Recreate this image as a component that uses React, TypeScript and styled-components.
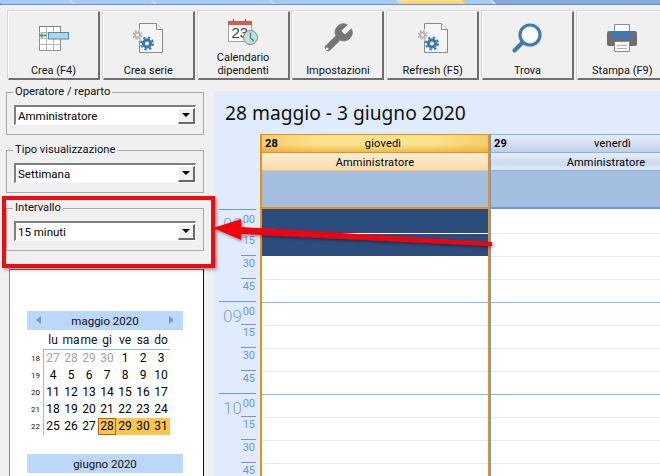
import React from 'react';
import styled, { createGlobalStyle } from 'styled-components';

const GlobalStyle = createGlobalStyle`
  html, body {
    margin: 0;
    padding: 0;
    background: #f0f0f0;
  }
  * {
    box-sizing: border-box;
  }
`;

const Page = styled.div`
  position: relative;
  width: 660px;
  height: 476px;
  overflow: hidden;
  background: #f0f0f0;
  font-family: Roboto, "Liberation Sans", sans-serif;
  font-size: 12px;
  color: #000;
`;

const TabStrip = styled.div`
  display: flex;
  height: 5px;
  overflow: hidden;
  background: #85a8d8;
  border-bottom: 1px solid #5f93d6;
`;

const Tab = styled.div<{ $w: number; $active?: boolean }>`
  width: ${(p) => p.$w}px;
  flex: none;
  transform: skewX(45deg);
  background: ${(p) => (p.$active ? 'linear-gradient(#ffdf90, #fdcf68)' : '#a8caf4')};
  border-right: 2px solid ${(p) => (p.$active ? '#e8c98a' : '#d4e3f6')};
`;

const Toolbar = styled.div`
  display: flex;
  gap: 2.8px;
  padding: 6px 0 0 8px;
  height: 81px;
  width: 760px;
`;

const ToolButton = styled.div`
  width: 92px;
  height: 69px;
  flex: none;
  display: flex;
  flex-direction: column;
  align-items: center;
  background: #f0f0f0;
  border-top: 1px solid #fff;
  border-left: 1px solid #fff;
  border-right: 2px solid #6f6f6f;
  border-bottom: 2px solid #6f6f6f;
  box-shadow: -1px -1px 0 #d6d6d6;
`;

const IconSlot = styled.div<{ $high?: boolean }>`
  height: 30px;
  margin-top: ${(p) => (p.$high ? 5 : 11)}px;
  display: flex;
  align-items: center;
  justify-content: center;
`;

const ToolLabel = styled.div`
  flex: 1;
  display: flex;
  align-items: flex-end;
  padding-bottom: 1px;
  text-align: center;
  line-height: 13px;
  font-size: 11px;
  color: #111;
`;

const Body = styled.div`
  display: flex;
  height: 390px;
`;

const Sidebar = styled.div`
  width: 214px;
  flex: none;
  display: flex;
  flex-direction: column;
`;

const Group = styled.fieldset`
  margin: 0 0 9px 6px;
  padding: 0 7px;
  width: 198px;
  height: 49px;
  flex: none;
  border: 1px solid #a9a9a9;
  min-inline-size: 0;
`;

const Legend = styled.legend`
  padding: 0 2px;
  margin-left: -1px;
  font-size: 11.2px;
  line-height: 12px;
  color: #111;
`;

const Combo = styled.div`
  height: 20px;
  margin-top: 7px;
  display: flex;
  align-items: center;
  justify-content: space-between;
  background: #fff;
  border-top: 2px solid #7f7f7f;
  border-left: 2px solid #7f7f7f;
  border-right: 1px solid #f8f8f8;
  border-bottom: 1px solid #f8f8f8;
  padding-left: 2px;
  font-size: 11.5px;
`;

const ComboArrow = styled.div`
  width: 17px;
  height: 16px;
  display: flex;
  align-items: center;
  justify-content: center;
  background: #f0f0f0;
  border-top: 1px solid #fff;
  border-left: 1px solid #fff;
  border-right: 2px solid #6a6a6a;
  border-bottom: 2px solid #6a6a6a;

  &::after {
    content: '';
    border-left: 4px solid transparent;
    border-right: 4px solid transparent;
    border-top: 4px solid #000;
  }
`;

const CalendarPanel = styled.div`
  margin: 9px 0 0 9px;
  width: 195px;
  flex: 1;
  background: #fff;
  border-top: 1px solid #777;
  border-left: 1px solid #8a8a8a;
  border-right: 1px solid #111;
  padding: 41px 19px 0 17px;
`;

const MonthBar = styled.div`
  position: relative;
  height: 19px;
  width: 156px;
  background: #bbd7fb;
  display: flex;
  align-items: center;
  justify-content: center;
  font-size: 11.5px;
  color: #111;
`;

const MonthArrow = styled.span<{ $right?: boolean }>`
  position: absolute;
  top: 5px;
  ${(p) => (p.$right ? 'right: 9px;' : 'left: 9px;')}
  border-top: 4.5px solid transparent;
  border-bottom: 4.5px solid transparent;
  ${(p) => (p.$right ? 'border-left: 5px solid #6f9bd6;' : 'border-right: 5px solid #6f9bd6;')}
`;

const WeekDays = styled.div`
  display: grid;
  grid-template-columns: repeat(7, 18px);
  margin-left: 16px;
  padding-left: 1px;
  height: 20px;
  align-items: center;
  border-bottom: 1px solid #93bbef;
  width: 127px;
  font-size: 12px;
  color: #111;
  text-align: center;
  white-space: nowrap;
`;

const WeekRow = styled.div`
  display: flex;
  height: 17px;
`;

const WeekNo = styled.div`
  width: 17px;
  flex: none;
  font-size: 8px;
  line-height: 17px;
  text-align: right;
  padding-right: 3px;
  border-right: 1px solid #93bbef;
  color: #111;
`;

const DayCell = styled.div<{ $muted?: boolean; $range?: boolean; $today?: boolean }>`
  width: 18px;
  height: 17px;
  flex: none;
  text-align: center;
  line-height: 17px;
  font-size: 12px;
  color: ${(p) => (p.$muted ? '#a3a3a3' : '#000')};
  background: ${(p) => (p.$range ? '#fbc64f' : 'transparent')};
  ${(p) => p.$today && 'border: 1px solid #b5600f; line-height: 15px;'}
`;

const NextMonth = styled(MonthBar)`
  margin-top: 19px;
`;

const Scheduler = styled.div`
  width: 446px;
  flex: none;
  margin-top: 5px;
  background: #e0ecfd;
  display: flex;
  flex-direction: column;
  overflow: hidden;
`;

const RangeTitle = styled.div`
  height: 43px;
  flex: none;
  padding: 8px 0 0 11px;
  font-family: "Noto Sans", sans-serif;
  font-size: 19.2px;
  line-height: 28px;
  color: #111;
`;

const Grid = styled.div`
  display: flex;
  flex: none;
`;

const Gutter = styled.div`
  width: 46px;
  flex: none;
  padding-top: 75px;
`;

const HourRow = styled.div`
  position: relative;
  height: 92px;
  margin-left: 5px;
`;

const Quarter = styled.div<{ $first?: boolean }>`
  height: 23px;
  margin-left: ${(p) => (p.$first ? 0 : 22)}px;
  margin-right: 4px;
  border-top: 1px solid #6d97d8;
  text-align: right;
  padding-right: 1px;
  font-size: 11px;
  line-height: ${(p) => (p.$first ? 19 : 16)}px;
  color: #6d97d8;
`;

const HourBig = styled.span`
  position: absolute;
  left: 4px;
  top: 3px;
  font-size: 17px;
  font-weight: 300;
  line-height: 24px;
  color: #7fa3dd;
`;

const DayColumn = styled.div<{ $active?: boolean }>`
  width: ${(p) => (p.$active ? 230 : 231)}px;
  flex: none;
  display: flex;
  flex-direction: column;
  border-left: ${(p) => (p.$active ? '2px solid #e9920f' : '1px solid #6d97d8')};
  border-right: ${(p) => (p.$active ? '2px solid #e9920f' : 'none')};
`;

const DayHead = styled.div<{ $active?: boolean }>`
  height: 19px;
  display: flex;
  align-items: center;
  font-size: 11px;
  letter-spacing: 0.2px;
  padding: 0 ${(p) => (p.$active ? 0 : 3)}px 0 3px;
  border-top: 1px solid ${(p) => (p.$active ? '#e9920f' : '#8fb0de')};
  border-bottom: 1px solid ${(p) => (p.$active ? '#e9920f' : '#8fb0de')};
  background: ${(p) =>
    p.$active
      ? 'linear-gradient(180deg, transparent 55%, rgba(235, 150, 30, 0.55) 100%), linear-gradient(90deg, #f5cd6b, #fbe38e 25%, #fbe38e 75%, #f5cd6b)'
      : 'linear-gradient(#e4ecf7, #d3dfef 55%, #bccfe8)'};
`;

const DayNum = styled.b`
  font-size: 11px;
`;

const DayName = styled.span`
  flex: 1;
  text-align: center;
`;

const ResourceHead = styled.div<{ $active?: boolean }>`
  height: 18px;
  text-align: center;
  font-size: 11px;
  letter-spacing: 0.2px;
  line-height: 19px;
  border-bottom: 1px solid ${(p) => (p.$active ? '#f2c27a' : '#8fb0de')};
  background: ${(p) =>
    p.$active ? 'linear-gradient(#fbeed7, #fbd9a6)' : 'linear-gradient(#e6edf8, #cddcee 60%, #e2e9f5)'};
`;

const AllDay = styled.div<{ $active?: boolean }>`
  height: 38px;
  background: #a4bedf;
  border-bottom: 2px solid ${(p) => (p.$active ? '#e9920f' : '#6d97d8')};
`;

const Slot = styled.div<{ $hour?: boolean; $selected?: boolean; $first?: boolean }>`
  height: ${(p) => (p.$first ? 25 : 23)}px;
  flex: none;
  background: ${(p) => (p.$selected ? '#2b4c7c' : '#fff')};
  border-bottom: 1px solid ${(p) => (p.$selected ? '#fff' : p.$hour ? '#8fb4e4' : '#e6ebf5')};
`;

const RedBox = styled.div`
  position: absolute;
  left: 2px;
  top: 196px;
  width: 213px;
  height: 72px;
  border: 4px solid #ef0b10;
  box-shadow: 2px 2px 3px rgba(0, 0, 0, 0.35);
  pointer-events: none;
`;

const ArrowLayer = styled.svg`
  position: absolute;
  left: 210px;
  top: 215px;
  overflow: visible;
  pointer-events: none;
`;

const CreaIcon = () => (
  <svg width="30" height="25" viewBox="0 0 30 25">
    <path d="M.5.500h21v24h-21z" fill="#fff" stroke="#8f8f8f" />
    <path d="M.5 6.500h21M.5 12.500h21M.5 18.500h21M7.500.500v24M14.500.500v24" fill="none" stroke="#b8b8b8" />
    <path d="M.5 6V.5h21V6" fill="none" stroke="#808080" />
    <rect x="9.500" y="6.500" width="20" height="6.500" fill="#b9cfe8" stroke="#3d93b5" />
    <path d="M0 9.500l3.500-3v2h4.500v2H3.500v2z" fill="#52a884" />
  </svg>
);

const GearDocIcon = () => (
  <svg width="30" height="30" viewBox="0 0 30 30">
    <path d="M6.500.500h17l6 6v23h-23z" fill="#f5f5f5" stroke="#8a8a8a" />
    <path d="M23.500.500v6h6" fill="#fff" stroke="#8a8a8a" />
    <circle cx="4.500" cy="12" r="6" fill="#f0f0f0" />
    <circle cx="4.500" cy="12" r="2.600" fill="none" stroke="#b5b5b5" strokeWidth="2" />
    <circle cx="4.500" cy="12" r="4.300" fill="none" stroke="#b5b5b5" strokeWidth="1.600" strokeDasharray="1.700 1.700" />
    <circle cx="14" cy="20.500" r="3.600" fill="none" stroke="#3c76b4" strokeWidth="3" />
    <circle cx="14" cy="20.500" r="6" fill="none" stroke="#3c76b4" strokeWidth="2" strokeDasharray="2.400 2.310" />
  </svg>
);

const CalendarIcon = () => (
  <svg width="30" height="26" viewBox="0 0 30 26">
    <rect x=".5" y="2.500" width="23" height="20" fill="#fafafa" stroke="#a0a0a0" />
    <rect x="0" y="2" width="24" height="4" fill="#dc5a4b" />
    <path d="M5.500 0v3.500M17.500 0v3.500" stroke="#777" strokeWidth="1.500" />
    <text x="3.500" y="19" fontFamily="Liberation Sans, sans-serif" fontSize="15" fill="#444">23</text>
    <circle cx="22.500" cy="18.500" r="7" fill="#bfe3d0" stroke="#7e8a90" />
    <path d="M22.500 13.500v5.500l3.500 3" fill="none" stroke="#3f75b0" strokeWidth="1.200" />
  </svg>
);

const WrenchIcon = () => (
  <svg width="34" height="34" viewBox="0 0 24 24">
    <path
      d="M14.700 6.300a1 1 0 0 0 0 1.400l1.600 1.600a1 1 0 0 0 1.400 0l3.770-3.770a6 6 0 0 1-7.940 7.940l-6.910 6.910a2.120 2.120 0 0 1-3-3l6.910-6.910a6 6 0 0 1 7.940-7.940l-3.760 3.760z"
      fill="#757575"
      stroke="#757575"
      strokeWidth="0.600"
    />
    <circle cx="4.300" cy="19.700" r="1" fill="#f0f0f0" />
  </svg>
);

const SearchIcon = () => (
  <svg width="30" height="30" viewBox="0 0 30 30">
    <circle cx="18" cy="12" r="10" fill="#fafbfd" stroke="#3f7ab8" strokeWidth="3.200" />
    <path d="M10.500 19.500L2.500 27.500" stroke="#3f7ab8" strokeWidth="4" strokeLinecap="round" />
  </svg>
);

const PrintIcon = () => (
  <svg width="30" height="28" viewBox="0 0 30 28">
    <path d="M7.500.500h15v9h-15z" fill="#fafafa" stroke="#8a8a8a" />
    <rect x="0" y="7" width="30" height="15" rx="2" fill="#6e6e6e" />
    <rect x="5" y="7" width="20" height="7" fill="#3f78b8" />
    <path d="M7.500 17.500h15v10h-15z" fill="#fafafa" stroke="#8a8a8a" />
    <path d="M10 21.500h10M10 24.500h10" stroke="#b0b0b0" />
  </svg>
);

const tools: { label: React.ReactNode; icon: React.ReactNode; high?: boolean }[] = [
  { label: 'Crea (F4)', icon: <CreaIcon /> },
  { label: 'Crea serie', icon: <GearDocIcon /> },
  { label: <>Calendario<br />dipendenti</>, icon: <CalendarIcon />, high: true },
  { label: 'Impostazioni', icon: <WrenchIcon /> },
  { label: 'Refresh (F5)', icon: <GearDocIcon /> },
  { label: 'Trova', icon: <SearchIcon /> },
  { label: 'Stampa (F9)', icon: <PrintIcon /> },
];

const groups = [
  { title: 'Operatore / reparto', value: 'Amministratore' },
  { title: 'Tipo visualizzazione', value: 'Settimana' },
  { title: 'Intervallo', value: '15 minuti' },
];

const weeks = [
  { no: 18, days: [27, 28, 29, 30, 1, 2, 3] },
  { no: 19, days: [4, 5, 6, 7, 8, 9, 10] },
  { no: 20, days: [11, 12, 13, 14, 15, 16, 17] },
  { no: 21, days: [18, 19, 20, 21, 22, 23, 24] },
  { no: 22, days: [25, 26, 27, 28, 29, 30, 31] },
];

const hours = ['08', '09', '10'];
const slots = Array.from({ length: 12 }, (_, i) => i);

const Column = ({ active, num, name }: { active?: boolean; num: string; name: string }) => (
  <DayColumn $active={active}>
    <DayHead $active={active}>
      <DayNum>{num}</DayNum>
      <DayName>{name}</DayName>
    </DayHead>
    <ResourceHead $active={active}>Amministratore</ResourceHead>
    <AllDay $active={active} />
    {slots.map((i) => (
      <Slot key={i} $first={i === 0} $hour={i % 4 === 3} $selected={active && i < 2} />
    ))}
  </DayColumn>
);

export default function App() {
  return (
    <Page>
      <GlobalStyle />
      <TabStrip>
        <Tab $w={73} />
        <Tab $w={82} />
        <Tab $w={118} />
        <Tab $w={127} />
        <Tab $w={66} $active />
        <Tab $w={28} />
      </TabStrip>
      <Toolbar>
        {tools.map((t, i) => (
          <ToolButton key={i}>
            <IconSlot $high={t.high}>{t.icon}</IconSlot>
            <ToolLabel>{t.label}</ToolLabel>
          </ToolButton>
        ))}
      </Toolbar>
      <Body>
        <Sidebar>
          {groups.map((g) => (
            <Group key={g.title}>
              <Legend>{g.title}</Legend>
              <Combo>
                {g.value}
                <ComboArrow />
              </Combo>
            </Group>
          ))}
          <CalendarPanel>
            <MonthBar>
              <MonthArrow />
              maggio 2020
              <MonthArrow $right />
            </MonthBar>
            <WeekDays>
              {['lu', 'ma', 'me', 'gi', 've', 'sa', 'do'].map((d) => (
                <span key={d}>{d}</span>
              ))}
            </WeekDays>
            {weeks.map((w) => (
              <WeekRow key={w.no}>
                <WeekNo>{w.no}</WeekNo>
                {w.days.map((d, i) => (
                  <DayCell
                    key={i}
                    $muted={w.no === 18 && i < 4}
                    $range={w.no === 22 && i >= 3}
                    $today={w.no === 22 && i === 3}
                  >
                    {d}
                  </DayCell>
                ))}
              </WeekRow>
            ))}
            <NextMonth>giugno 2020</NextMonth>
          </CalendarPanel>
        </Sidebar>
        <Scheduler>
          <RangeTitle>28 maggio - 3 giugno 2020</RangeTitle>
          <Grid>
            <Gutter>
              {hours.map((h) => (
                <HourRow key={h}>
                  <HourBig>{h}</HourBig>
                  <Quarter $first>00</Quarter>
                  <Quarter>15</Quarter>
                  <Quarter>30</Quarter>
                  <Quarter>45</Quarter>
                </HourRow>
              ))}
            </Gutter>
            <Column active num="28" name="giovedì" />
            <Column num="29" name="venerdì" />
          </Grid>
        </Scheduler>
      </Body>
      <RedBox />
      <ArrowLayer width="290" height="50" viewBox="0 0 290 50">
        <defs>
          <filter id="arrowShadow" x="-5%" y="-30%" width="110%" height="170%">
            <feDropShadow dx="1.500" dy="2" stdDeviation="1.500" floodColor="#000" floodOpacity="0.35" />
          </filter>
        </defs>
        <path d="M3 13L31 4L31 12L282 27L282 31L31 19L31 25Z" fill="#f4060c" filter="url(#arrowShadow)" />
      </ArrowLayer>
    </Page>
  );
}
